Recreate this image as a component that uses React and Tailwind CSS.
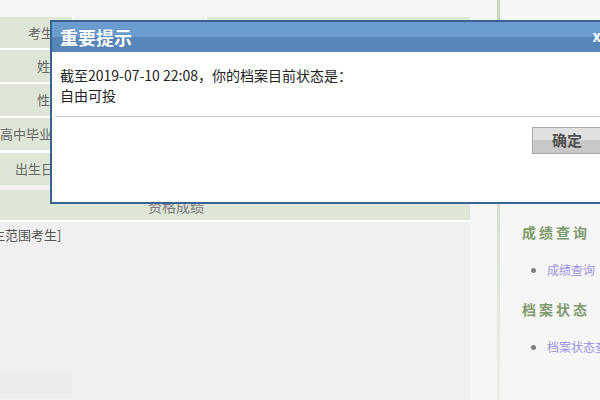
import React from "react";

const sans = { fontFamily: '"Noto Sans CJK SC", "Liberation Sans", sans-serif' };

function LabelRow({ h, label, extra = "" }) {
  return (
    <div className={`flex gap-[2px] ${h}`}>
      <div className={`w-[72px] shrink-0 bg-[#dfe5d7] flex items-center overflow-hidden whitespace-nowrap text-[13px] text-[#666] ${extra}`}>
        {label}
      </div>
      <div className="w-[131px] shrink-0 bg-[#f1f1f1]" />
      <div className="flex-1 bg-[#dfe5d7]" />
    </div>
  );
}

export default function App() {
  return (
    <div className="relative w-[600px] h-[400px] overflow-hidden bg-[#f5f5f5]" style={sans}>
      <div className="flex h-full">
        {/* main left column */}
        <div className="w-[470px] shrink-0 flex flex-col pt-[17px]">
          <div className="flex flex-col bg-white">
            <LabelRow h="h-[31px]" label="考生号" extra="justify-end pr-[5px]" />
            <div className="h-[2px]" />
            <LabelRow h="h-[32px]" label="姓名" extra="justify-end pr-[3px] tracking-[3px]" />
            <div className="h-[2px]" />
            <LabelRow h="h-[32px]" label="性别" extra="justify-end pr-[3px] tracking-[3px]" />
            <div className="h-[2px]" />
            <LabelRow h="h-[32px]" label="高中毕业学校" extra="justify-start" />
            <div className="h-[3px]" />
            <LabelRow h="h-[32px]" label="出生日期" extra="justify-end pr-[5px]" />
            <div className="h-[5px] bg-[#f2f2f2]" />
            <div className="h-[30px] bg-[#dfe5d7] flex items-end pb-[3px] pl-[148px] text-[14px] text-[#777]">
              资格成绩
            </div>
            <div className="h-[2px]" />
          </div>
          <div className="flex-1 bg-[#efefef] flex flex-col overflow-hidden">
            <div className="mt-[6px] text-[13px] leading-[14px] text-[#555] whitespace-nowrap ml-[-8px]">
              生范围考生]
            </div>
            <div className="mt-[130px] w-[72px] h-[22px] bg-[#ebebeb]" />
          </div>
        </div>
        <div className="w-[27px] shrink-0 bg-[#f5f5f5]" />
        {/* sidebar */}
        <div className="flex-1 min-w-0 overflow-hidden flex bg-[#f6f6f6]">
          <div className="w-[3px] shrink-0 bg-linear-to-b from-[#cbd5c0] via-[#d6ddcd] to-[#eef0eb]" />
          <div className="flex-1 flex flex-col pt-[222px] pl-[22px] whitespace-nowrap">
            <div className="h-[20px] leading-[20px] text-[14px] font-bold tracking-[3px] text-[#7f9b6d]">
              成绩查询
            </div>
            <div className="mt-[18px] h-[20px] flex items-center pl-[9px] gap-[11px]">
              <span className="w-[5px] h-[5px] shrink-0 rounded-full bg-[#808080]" />
              <span className="text-[12px] text-[#9b92e2]">成绩查询</span>
            </div>
            <div className="mt-[19px] h-[20px] leading-[20px] text-[14px] font-bold tracking-[3px] text-[#7f9b6d]">
              档案状态
            </div>
            <div className="mt-[18px] h-[20px] flex items-center pl-[9px] gap-[11px]">
              <span className="w-[5px] h-[5px] shrink-0 rounded-full bg-[#808080]" />
              <span className="text-[12px] text-[#9b92e2]">档案状态查询</span>
            </div>
          </div>
        </div>
      </div>

      {/* dialog overlay */}
      <div className="absolute left-[50px] top-[20px] w-[562px] h-[184px] border-2 border-[#36638f] bg-white flex flex-col">
        <div className="relative h-[30px] bg-[linear-gradient(to_bottom,#6a9cd0_50%,#5787b9_50%)] flex items-center pl-[8px]">
          <span className="text-[18px] font-bold text-white leading-[30px] [text-shadow:0_0_1px_#3a6592]">
            重要提示
          </span>
          <span className="absolute right-[9px] top-[5px] text-[15px] font-bold text-white leading-[18px]">x</span>
        </div>
        <div className="pt-[13px] px-[8px] text-[14px] leading-[20px] text-[#222]">
          <div>截至2019-07-10 22:08，你的档案目前状态是：</div>
          <div>自由可投</div>
        </div>
        <div className="mx-[3px] mt-[11px] h-px bg-[#c8c8c8]" />
        <div className="mt-[10px] flex justify-end pr-[8px]">
          <div className="w-[70px] h-[27px] border border-[#a9a9a9] bg-[linear-gradient(to_bottom,#e0e0e0_50%,#c8c8c8_50%)] flex items-center justify-center text-[15px] font-bold text-[#505050]">
            确定
          </div>
        </div>
      </div>
    </div>
  );
}
